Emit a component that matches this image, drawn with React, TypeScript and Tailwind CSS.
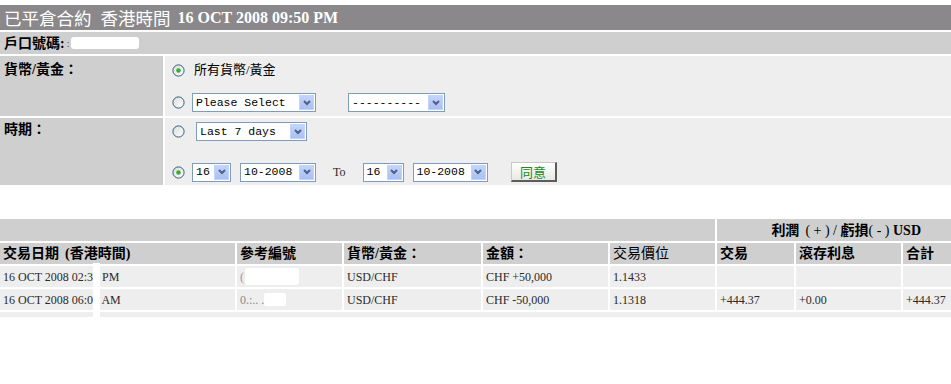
import { useId } from "react";

const serif = "font-['Liberation_Serif','Noto_Sans_CJK_TC',serif]";
const cjk = "font-['Noto_Sans_CJK_TC','Liberation_Sans',sans-serif]";

function Radio({ checked = false }: { checked?: boolean }) {
  const id = useId();
  return (
    <svg width="13" height="13" viewBox="0 0 13 13" className="shrink-0">
      <defs>
        <linearGradient id={id} x1="0" y1="0" x2="1" y2="1">
          <stop offset="0" stopColor="#dcdcd4" />
          <stop offset="1" stopColor="#ffffff" />
        </linearGradient>
      </defs>
      <circle cx="6.5" cy="6.5" r="5.6" fill={`url(#${id})`} stroke="#2c5a8c" strokeWidth="1" />
      {checked && <circle cx="6.5" cy="6.5" r="2.3" fill="#35b035" />}
    </svg>
  );
}

function Select({ label, className }: { label: string; className: string }) {
  return (
    <div
      className={`flex items-center justify-between border border-[#7f9db9] bg-white pl-[3px] pr-px font-['Liberation_Mono',monospace] text-[11.5px] leading-none text-black ${className}`}
    >
      <span className="whitespace-pre">{label}</span>
      {/* XP style drop button */}
      <span className="flex h-[15px] w-[15px] items-center justify-center border border-[#c3d3fd] bg-gradient-to-b from-[#c4d4fb] to-[#a9c0f2]">
        <svg width="8" height="6" viewBox="0 0 8 6">
          <polyline points="1,1 4,4 7,1" fill="none" stroke="#4d6185" strokeWidth="2" />
        </svg>
      </span>
    </div>
  );
}

const head = `flex items-center pl-[3px] bg-[#cfcfcf] text-[14px] font-bold text-black ${serif}`;
const cell = `flex items-center pl-[3px] bg-[#eeeeee] text-[12px] text-[#2a2a2a] ${serif}`;

export default function App() {
  return (
    <div className="h-[384px] w-[951px] overflow-hidden bg-white pt-[5px]">
      <div className="flex flex-col gap-[2px]">
        {/* title bar */}
        <div className="flex h-[25px] items-center bg-[#8a888a] pl-[4px] text-white">
          <span className={`${cjk} text-[17.5px] leading-none`}>已平倉合約</span>
          <span className={`${cjk} ml-[9px] text-[17.5px] leading-none`}>香港時間</span>
          <span className={`${serif} ml-[7px] text-[16px] font-bold leading-none`}>
            16 OCT 2008 09:50 PM
          </span>
        </div>

        {/* account row */}
        <div className={`flex h-[22px] items-center bg-[#cfcfcf] pl-[4px] text-[14px] font-bold ${serif}`}>
          戶口號碼:
          <span className="ml-[2px] text-[10px] font-normal text-[#555]">:</span>
          <span className="ml-[2px] h-[12px] w-[68px] rounded-[3px] bg-white" />
        </div>

        {/* currency */}
        <div className="flex h-[60px] gap-[2px]">
          <div className={`w-[163px] bg-[#cfcfcf] pl-[4px] pt-[3px] text-[14px] font-bold ${serif}`}>
            貨幣/黃金：
          </div>
          <div className="flex flex-1 flex-col bg-[#eeeeee] pl-[7px] pt-[4px]">
            <div className="flex h-[20px] items-center">
              <Radio checked />
              <span className={`ml-[9px] text-[13px] text-black ${serif}`}>所有貨幣/黃金</span>
            </div>
            <div className="mt-[13px] flex items-center">
              <Radio />
              <Select label="Please Select" className="ml-[7px] h-[19px] w-[124px]" />
              <Select label="----------" className="ml-[32px] h-[19px] w-[97px]" />
            </div>
          </div>
        </div>

        {/* period */}
        <div className="flex h-[67px] gap-[2px]">
          <div className={`w-[163px] bg-[#cfcfcf] pl-[4px] pt-px text-[14px] font-bold ${serif}`}>
            時期：
          </div>
          <div className="flex flex-1 flex-col bg-[#eeeeee] pl-[7px] pt-[4px]">
            <div className="flex items-center">
              <Radio />
              <Select label="Last 7 days" className="ml-[11px] h-[19px] w-[111px]" />
            </div>
            <div className="mt-[21px] flex items-center">
              <Radio checked />
              <Select label="16" className="ml-[7px] h-[19px] w-[39px]" />
              <Select label="10-2008" className="ml-[9px] h-[19px] w-[76px]" />
              <span className={`ml-[17px] text-[12px] text-[#2a2a2a] ${serif}`}>To</span>
              <Select label="16" className="ml-[17px] h-[19px] w-[41px]" />
              <Select label="10-2008" className="ml-[9px] h-[19px] w-[75px]" />
              <button
                className={`ml-[23px] flex h-[20px] w-[46px] items-center justify-center border border-[#c8c8c8] border-r-2 border-b-2 border-r-[#5c5c5c] border-b-[#5c5c5c] bg-gradient-to-b from-white to-[#e8e8e4] text-[13px] leading-none text-[#1a8a1a] ${cjk}`}
              >
                同意
              </button>
            </div>
          </div>
        </div>
      </div>

      {/* results table */}
      <div className="relative mt-[34px] grid grid-cols-[235px_105px_137px_125px_105px_77px_105px_48px] gap-[2px]">
        <div className="col-span-5 h-[22px] bg-[#cfcfcf]" />
        <div className={`${head} col-span-3 justify-end whitespace-pre pr-[30px] text-[13px]`}>
          利潤<span className="ml-[6px] font-normal">( + ) / </span>虧損<span className="font-normal">( - ) </span>USD
        </div>

        <div className={`${head} h-[21px]`}>
          交易日期<span className="ml-[6px]">(香港時間)</span>
        </div>
        <div className={head}>參考編號</div>
        <div className={head}>貨幣/黃金：</div>
        <div className={head}>金額：</div>
        <div className={`${head} font-normal`}>交易價位</div>
        <div className={head}>交易</div>
        <div className={head}>滾存利息</div>
        <div className={head}>合計</div>

        <div className={`${cell} h-[21px]`}>16 OCT 2008 02:35 PM</div>
        <div className={cell}>
          <span className="text-[#999]">(</span>
          <span className="ml-[1px] h-[17px] w-[54px] rounded-[3px] bg-white" />
        </div>
        <div className={cell}>USD/CHF</div>
        <div className={cell}>CHF +50,000</div>
        <div className={cell}>1.1433</div>
        <div className={cell} />
        <div className={cell} />
        <div className={cell} />

        <div className={`${cell} h-[21px]`}>16 OCT 2008 06:05 AM</div>
        <div className={cell}>
          <span className="text-[#888]">0.:.. .</span>
          <span className="h-[13px] w-[22px] rounded-[2px] bg-white" />
        </div>
        <div className={cell}>USD/CHF</div>
        <div className={cell}>CHF -50,000</div>
        <div className={cell}>1.1318</div>
        <div className={cell}>+444.37</div>
        <div className={cell}>+0.00</div>
        <div className={cell}>+444.37</div>

        <div className="col-span-8 h-[5px] bg-[#eeeeee]" />

        {/* redaction strip over the time column */}
        <div className="absolute left-[93px] top-[44px] h-[62px] w-[7px] bg-white" />
      </div>
    </div>
  );
}
